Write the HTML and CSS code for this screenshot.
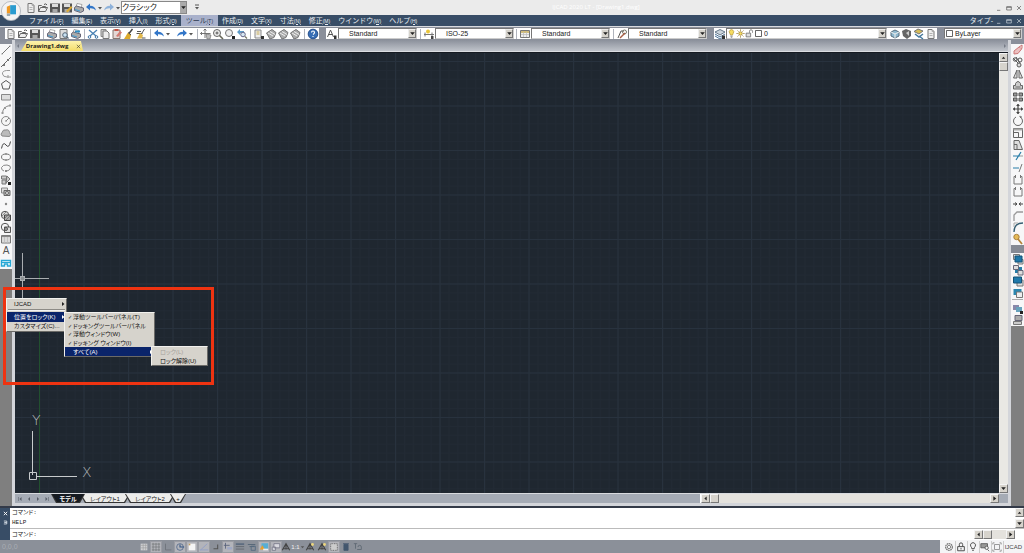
FILE: index.html
```html
<!DOCTYPE html>
<html lang="ja">
<head>
<meta charset="utf-8">
<title>IJCAD 2020 LT - [Drawing1.dwg]</title>
<link rel="stylesheet" href="styles.css">
</head>
<body>
<svg class="defs" aria-hidden="true">
  <defs>
    <g id="new"><path d="M3 1.500h4l2 2v7H3z" fill="#eee" stroke="#777"/><path d="M7 1.500v2h2M4.500 5.500h3M4.500 7.500h3" fill="none" stroke="#999" stroke-width=".7"/></g>
    <g id="open"><path d="M1.500 9.500v-6h3l1 1h3v2M1.500 9.500l2-4h7l-2 4z" fill="#eee" stroke="#666"/><path d="M7 2.500q2-1.500 3 .5" fill="none" stroke="#555"/></g>
    <g id="save"><path d="M1 1.500h10v9H1z" fill="#555"/><path d="M3 2h6v3H3z" fill="#ddd"/><path d="M3.500 7h5v3.500h-5z" fill="#aaa"/></g>
    <g id="saveas"><use href="#save"/><path d="M5 9l5-5 1.500 1.500-5 5z" fill="#d9a936"/></g>
    <g id="print"><path d="M4 1.500l5 1-1 3.500-5-1z" fill="#fff" stroke="#888" stroke-width=".7"/><path d="M1.500 5.500l2-1.500 7 2v3l-3 1.500-6-2z" fill="#aaa" stroke="#667"/><path d="M2 7.500l5 1.500" stroke="#469bce" stroke-width="1.200"/></g>
    <g id="preview"><path d="M2 1.500h7v9H2z" fill="#ddd" stroke="#777"/><circle cx="7" cy="7" r="2.300" fill="#c9e2f2" stroke="#567"/><path d="M8.500 8.500l2 2" stroke="#567" stroke-width="1.300"/></g>
    <g id="publish"><use href="#print"/><path d="M5 2.500h5v2H5z" fill="#2f8ec4"/></g>
    <g id="undo"><path d="M1 5l4-3.500v2.200q5 0 6 4.800-2.500-2.500-6-2.200v2.200z" fill="#3276c8"/></g>
    <g id="redo"><path d="M11 5L7 1.500v2.200q-5 0-6 4.800 2.500-2.500 6-2.200v2.200z" fill="#3276c8"/></g>
    <g id="redo2"><path d="M11 5L7 1.500v2.200q-5 0-6 4.800 2.500-2.500 6-2.200v2.200z" fill="#8fb2da"/></g>
    <g id="down"><path d="M4 5h4L6 7.500z" fill="#555"/></g>
    <g id="up"><path d="M3 8h6L6 4.500z" fill="#222"/></g>
    <g id="dn"><path d="M2 4h8L6 8.500z" fill="#222"/></g>
    <g id="lt"><path d="M8 2.500v7L4 6z" fill="#222"/></g>
    <g id="rt"><path d="M4 2v8l5-4z" fill="#222"/></g>
    <g id="rtw"><path d="M4 2v8l5-4z" fill="#fff"/></g>
    <g id="cut"><path d="M2 2l7 6M10 2L3 8" stroke="#4b83b5" stroke-width="1.300"/><circle cx="2.500" cy="9" r="1.300" fill="none" stroke="#3b73a5"/><circle cx="9.500" cy="9" r="1.300" fill="none" stroke="#3b73a5"/></g>
    <g id="copy"><path d="M2 1.500h5v7H2z" fill="#ccc" stroke="#888"/><path d="M4 3h4l2 2v5.500H4z" fill="#eee" stroke="#777"/></g>
    <g id="paste"><path d="M2 2h7v8.500H2z" fill="#e4d9d6" stroke="#87776f"/><path d="M3.500 1h4v2h-4z" fill="#c65344"/><path d="M5 8l4-5 2 1.500-4 4.500z" fill="#d47b72"/></g>
    <g id="brush"><path d="M9.500 1L6 5.500" stroke="#444" stroke-width="1.500"/><path d="M5 4.500l3 2.500-1 4H1z" fill="#dcaa2d"/><path d="M5 4.500l3 2.500" stroke="#444"/></g>
    <g id="match"><path d="M1.500 5.500h6M2 3.500h4M9.500 1L7 5" stroke="#555"/><path d="M5 5l3 2-1 3.500H2z" fill="#e0b64a"/><path d="M7 10h3.500" stroke="#555"/></g>
    <g id="pan"><path d="M5 1v9M.500 5.500h10M3.500 2.500L5 1l1.500 1.500M2 4L.500 5.500 2 7" fill="none" stroke="#666" stroke-width=".9"/><path d="M6 6l5 1-1 4H7z" fill="#bbb" stroke="#666" stroke-width=".6"/></g>
    <g id="zoom"><circle cx="5" cy="5" r="3.500" fill="#eee" stroke="#666"/><path d="M7.500 7.500L11 11" stroke="#665" stroke-width="1.600"/><path d="M3.500 5h3M5 3.500v3" stroke="#555"/></g>
    <g id="zoomw"><circle cx="5" cy="5" r="3.500" fill="#eee" stroke="#777"/><path d="M7 7l2 2" stroke="#777"/><path d="M8 8h3v3H8z" fill="#222"/></g>
    <g id="zoomp"><path d="M1 4l3-3v2h4v2H4v2z" fill="#5f9cc8"/><circle cx="7" cy="6.500" r="2.300" fill="#d6e7f2" stroke="#668"/><path d="M9 8.500l2 2" stroke="#776" stroke-width="1.300"/></g>
    <g id="props"><path d="M2 2h6v8H2z" fill="#eee" stroke="#888"/><path d="M3.500 4h3M3.500 6h3" stroke="#c4a954"/><path d="M8 8h3v3H8z" fill="#333"/></g>
    <g id="block"><path d="M1.500 5L7 1.500l4 3-2 5-4 1.500z" fill="#aaa" stroke="#777"/><path d="M3 5l5 3M5 3.500l5 3" stroke="#eee"/></g>
    <g id="help"><circle cx="6" cy="6" r="4.800" fill="#376eb5" stroke="#234d8b"/><path d="M4.500 4.500q0-1.500 1.500-1.500T7.500 4.500Q7.500 5.500 6 6.500M6 8v1" fill="none" stroke="#fff" stroke-width="1.100"/></g>
    <g id="style"><path d="M1.500 9L4.500 2l3 7M2.700 6.500h3.600" fill="none" stroke="#555"/><path d="M8 7.500h2.500V11H8z" fill="#333"/></g>
    <g id="dim"><path d="M1 6.500h10M2 4.500v4M9 4.500v4" stroke="#777"/><circle cx="5" cy="3.500" r="2" fill="#e9c53a"/><path d="M8 8h2.500v3H8z" fill="#444"/></g>
    <g id="table"><path d="M1.500 2.500h9v7h-9z" fill="#eee" stroke="#777"/><path d="M2 4h8" stroke="#c7ab55" stroke-width="1.500"/><path d="M2 6.500h8M4.500 4v5M7.500 4v5" stroke="#bbb" stroke-width=".7"/></g>
    <g id="leader"><path d="M2 10l3-7h3" fill="none" stroke="#555"/><circle cx="8.500" cy="4" r="2" fill="none" stroke="#776"/><path d="M4 10l5-5" stroke="#a85f45" stroke-width="1.500"/></g>
    <g id="layers"><path d="M1 4l5-2.500L11 4 6 7z" fill="#ccd4db" stroke="#66798b"/><path d="M1 6l5 3 5-3M1 8l5 3 4-2.500" fill="none" stroke="#4c7398"/></g>
    <g id="layerx"><use href="#layers"/><path d="M8 7.500h3V11H8z" fill="#333"/></g>
    <g id="layers2"><path d="M2 4l4-2 4 2v4L6 10 2 8z" fill="#8eb8ce" stroke="#566d7d"/><path d="M2 4l4 2 4-2M6 6v4" fill="none" stroke="#eee"/></g>
    <g id="layerp"><path d="M1 3l4-2 5 2v5l-4 3-4-3z" fill="#666"/><path d="M5 5l3-2v5z" fill="#ccc"/></g>
    <g id="layerf"><path d="M1 3.500L5 1l5 2-4 3z" fill="#d6bd58" stroke="#777"/><path d="M2 6l4 3 4-3M6 8l4 3" fill="none" stroke="#47799d" stroke-width="1.500"/></g>
    <g id="bulb"><path d="M4.500 8q0-1.500-1-2.500a3 3 0 1 1 5 0Q7.500 6.500 7.500 8z" fill="#f5dc61" stroke="#a9892d" stroke-width=".8"/><path d="M4.500 9.500h3M5 11h2" stroke="#666"/></g>
    <g id="sun"><circle cx="6" cy="6" r="2.300" fill="#f7df66" stroke="#94772a"/><path d="M6 .500v2M6 9.500v2M.500 6h2M9.500 6h2M2 2l1.500 1.500M8.500 8.500L10 10M10 2L8.500 3.500M2 10l1.500-1.500" stroke="#94772a"/></g>
    <g id="lockopen"><path d="M1.500 5.500h6v5h-6z" fill="#ddd" stroke="#666"/><path d="M6 5V3a2 2 0 0 1 4 0v2" fill="none" stroke="#666"/></g>
    <g id="swatch"><path d="M2 2h8v8H2z" fill="#fff" stroke="#333"/></g>
    <g id="logo"><circle cx="12" cy="12" r="11.500" fill="#f3f3f3" stroke="#aeb3ba"/><path d="M7 7l4-2v10H7z" fill="#f09a25"/><path d="M11 5h7v11h-7z" fill="#299bd0"/><path d="M7 15h4v3H7z" fill="#9ca9af"/></g>

    <g id="line"><path d="M2 10l8-8" stroke="#777"/><path d="M1.500 9.500h1v1h-1zM9.500 1.500h1v1h-1z" fill="#777"/></g>
    <g id="xline"><path d="M1 11L11 1" stroke="#666"/><path d="M3 8h2v2H3zM7 3h2v2H7z" fill="#777"/></g>
    <g id="pline"><path d="M10 2.500H6.500Q2 3 2.500 6T7 9h4M8 7v3" fill="none" stroke="#999"/></g>
    <g id="poly"><path d="M6 1.500l4.500 3.200L9 10H3L1.500 4.700z" fill="none" stroke="#555"/></g>
    <g id="rect"><path d="M1.500 3.500h9v5.500h-9z" fill="#ddd" stroke="#888"/></g>
    <g id="arc"><path d="M2.500 10Q3 3.500 10 2.500" fill="none" stroke="#888"/><path d="M1.500 9h2v2h-2zM9 1.500h2v2H9zM4 4h2v2H4z" fill="#999"/></g>
    <g id="circle"><circle cx="6" cy="6" r="4.500" fill="#f6f6f6" stroke="#888"/><path d="M6 6l3-3M5 6h2" stroke="#888"/></g>
    <g id="cloud"><path d="M2 9Q0 7 2 5.500 3 2 6 3q3-1 3.500 2.500Q12 8 9.500 9.500z" fill="#bbb" stroke="#888"/></g>
    <g id="spline"><path d="M1.500 9.500Q3 2 6 6t4.500-3.500" fill="none" stroke="#444"/></g>
    <g id="ellipse"><ellipse cx="6" cy="6" rx="4.500" ry="3" fill="none" stroke="#777"/><path d="M5 2h2v2H5zM5 8h2v2H5z" fill="#999"/></g>
    <g id="earc"><path d="M4 9Q1 8 1.500 5.500 3 2.500 7 3t3.500 3Q9.500 9 6 9.200" fill="none" stroke="#888"/><path d="M5 8h2v2H5z" fill="#888"/></g>
    <g id="insert"><path d="M1.500 2h5v3h-5zM2 6h4v4H2zM7 2l3 3-4 4z" fill="#ccc" stroke="#777"/><path d="M8 8h3v3H8z" fill="#222"/></g>
    <g id="mkblock"><path d="M1.500 2h6v5h-6z" fill="#ddd" stroke="#888"/><path d="M4 4.500h6v5H4z" fill="#bbb" stroke="#666"/><circle cx="7" cy="7" r="1.500" fill="#eee" stroke="#666"/></g>
    <g id="point"><circle cx="6" cy="6" r="1.200" fill="#888"/></g>
    <g id="hatch"><circle cx="5" cy="5" r="3.700" fill="#ddd" stroke="#555"/><path d="M4.500 5h6v5.500h-6z" fill="#aaa" stroke="#444"/><path d="M2 6l4-4M4 9l5-5M6 10l4-4" stroke="#666" stroke-width=".7"/></g>
    <g id="region"><circle cx="5" cy="5" r="3.700" fill="none" stroke="#555"/><path d="M4.500 5h6v5.500h-6z" fill="#ddd" stroke="#555"/><circle cx="6" cy="7" r="1.500" fill="#aaa" stroke="#555"/></g>
    <g id="grid"><path d="M1.500 2.500h9v7.500h-9z" fill="#eee" stroke="#777"/><path d="M2 3.500h8" stroke="#888" stroke-width="1.500"/><path d="M2 6h8M2 8h8M4.500 4v6M7.500 4v6" stroke="#bbb" stroke-width=".8"/></g>
    <g id="block2"><path d="M1.500 9V3.500h9V9h-3V7h-3v2z" fill="#e5f5fa" stroke="#26a7d5" stroke-width="1.400"/><path d="M1.500 5.500h9" stroke="#26a7d5"/></g>

    <g id="erase"><path d="M2 7l5-4 3 1.500L6 9.500 2 10z" fill="#ecc0c0" stroke="#c77"/><path d="M7 3L10 1v3" fill="#f3dada" stroke="#c77"/></g>
    <g id="cpy"><path d="M1 2l6 6M4 1l4 6" stroke="#555"/><circle cx="3" cy="3.500" r="1.700" fill="none" stroke="#555"/><circle cx="8" cy="4" r="2" fill="none" stroke="#555"/><circle cx="7" cy="9" r="2" fill="#ddd" stroke="#555"/></g>
    <g id="mirror"><path d="M5 2L1.500 10H5zM7 2l3.500 8H7z" fill="#ddd" stroke="#666"/></g>
    <g id="offset"><path d="M1.500 10V6.500h2v-2q2.500-4 5 0v2h2V10zM3.500 8h5" fill="#ccc" stroke="#666"/></g>
    <g id="array"><path d="M1.500 2h3.500v3H1.500zM7 2h3.500v3H7zM1.500 7H5v3H1.500zM7 7h3.500v3H7z" fill="#999" stroke="#555"/></g>
    <g id="move"><path d="M6 1v10M1 6h10" stroke="#444" stroke-width="1.200"/><path d="M4 3l2-2 2 2zM4 9l2 2 2-2zM3 4L1 6l2 2zM9 4l2 2-2 2z" fill="#444"/></g>
    <g id="rotate"><path d="M8 2a4.500 4.500 0 1 1-4 0M8 2V.800M8 2h2" fill="none" stroke="#666"/></g>
    <g id="scale"><path d="M1.500 1.500h9v9h-9zM1.500 5.500h5v5" fill="none" stroke="#666"/><path d="M1.500 1.500h9v2h-9z" fill="#aaa"/></g>
    <g id="stretch"><path d="M2 1.500h5l3.500 9H2zM2 5.500h3v5" fill="#ddd" stroke="#666"/></g>
    <g id="trim"><path d="M1 6h7M4 10l5-8" stroke="#287da8" stroke-width="1.200"/><path d="M8 6h3" stroke="#999"/></g>
    <g id="extend"><path d="M1 6h6" stroke="#287da8"/><path d="M7 10l3-8" stroke="#777"/></g>
    <g id="break"><path d="M4 2.500H2V10h8V2.500H8M3.500 1v3M8.500 1v3" fill="none" stroke="#777"/></g>
    <g id="join"><path d="M1 6h4M7 6h4M3 4.500L5 6 3 7.500M9 4.500L7 6l2 1.500" fill="none" stroke="#444"/></g>
    <g id="chamfer"><path d="M2 11V5l3-3h6" fill="none" stroke="#999" stroke-width="1.300"/></g>
    <g id="fillet"><path d="M2 11Q2 2 11 2" fill="none" stroke="#355e72" stroke-width="1.300"/><path d="M2 2v4M2 2h4" stroke="#aaa"/></g>
    <g id="explode"><circle cx="4.500" cy="4" r="2.700" fill="#e6bb58" stroke="#aa8240"/><path d="M6 6l4 5" stroke="#b38338" stroke-width="1.800"/></g>
    <g id="front"><path d="M1.500 1.500h6v5h-6zM6 6.500h5V11H6z" fill="#ddd" stroke="#777"/><path d="M3 3h7v6H3z" fill="#1d77a9" stroke="#155276"/></g>
    <g id="back"><path d="M3 3h7v6H3z" fill="#267da8"/><path d="M1.500 1.500h5v4h-5zM6 6.500h5V11H6z" fill="#ddd" stroke="#667"/></g>
    <g id="above"><path d="M5 5h6v6H5z" fill="#ddd" stroke="#777"/><path d="M1.500 2h8v6h-8z" fill="#1f79ab" stroke="#155276"/></g>
    <g id="under"><path d="M1.500 2h8v6h-8z" fill="#2b86af"/><path d="M4.500 5h6v5.500h-6z" fill="#eee" stroke="#777"/></g>
    <g id="txtfront"><path d="M1 2h6v5H1z" fill="#88a"/><path d="M4 4h6v5H4z" fill="#66a1bb"/><path d="M8 8h3v3H8z" fill="#222"/></g>
    <g id="hatchback"><path d="M3 1.500h7v5H3z" fill="#aaa" stroke="#667"/><path d="M1.500 7.500h8v3h-8z" fill="#ccc" stroke="#777"/></g>

    <g id="snap"><path d="M2 2h8v8H2z" fill="#cfd0d3"/><path d="M2 4h8M2 7h8M5 2v8M8 2v8" stroke="#999" stroke-width=".7"/></g>
    <g id="sgrid"><path d="M1 2.500h10M1 6h10M1 9.500h10M2.500 1v10M6 1v10M9.500 1v10" stroke="#707276" stroke-width=".8"/></g>
    <g id="ortho"><path d="M3 2v7.500h7" fill="none" stroke="#6c7178"/></g>
    <g id="polar"><circle cx="6" cy="6" r="4" fill="none" stroke="#546b8b"/><path d="M6 3v3h5" fill="none" stroke="#345684" stroke-width="1.300"/></g>
    <g id="osnap"><path d="M2 2h8v8H2z" fill="#f5f5f5"/><path d="M2 2h2v2H2z" fill="#bd9c62"/></g>
    <g id="angle"><path d="M1 9.500h10M2 9.500L10 2" fill="none" stroke="#8f9dc8"/></g>
    <g id="dyn"><path d="M8 3v5H3" fill="none" stroke="#555" stroke-width="1.300"/></g>
    <g id="input"><path d="M3 1v7M1 4h7" stroke="#56607a"/><path d="M5 6h6v3H5z" fill="#a0a9c5"/></g>
    <g id="lines"><path d="M1 2.500h10" stroke="#4b5e76" stroke-width="1.500"/><path d="M1 5.500h10M1 8.500h10" stroke="#60656c"/></g>
    <g id="cycle"><path d="M1 3h9M3 5.500h6" stroke="#4f6272"/><path d="M5 5h5v5H5z" fill="none" stroke="#536980"/></g>
    <g id="model"><path d="M3 1.500h8v7H3z" fill="#58aed5"/><path d="M1 9l3-5 3 5z" fill="#eaa02b"/><path d="M5 8h6v2H5z" fill="#eee"/></g>
    <g id="quick"><path d="M3.500 2h7v5h-7zM1.500 6h4v4h-4z" fill="#d9d9df" stroke="#767788"/></g>
    <g id="scaleicon"><path d="M1.500 10L6 2l4.500 8M6 3v6M3 8h6" fill="none" stroke="#444" stroke-width="1.300"/></g>
    <g id="ann"><path d="M1.500 10L6 2l4.500 8M6 3v6M3 8h6" fill="none" stroke="#444" stroke-width="1.300"/><circle cx="9" cy="3" r="1.700" fill="#edd67c"/></g>
    <g id="dotted"><path d="M2 2h8v8H2z" fill="#ccc" stroke="#555" stroke-dasharray="1"/></g>
    <g id="trash"><path d="M3.500 3h5v7h-5zM2.500 2h7" fill="#42566d" stroke="#42566d"/></g>
    <g id="clean"><path d="M1 2h4M3 2v6M5 9h5V6a2 2 0 0 0-4 0" fill="none" stroke="#5c6671"/></g>
    <g id="gear"><circle cx="6" cy="6" r="4" fill="none" stroke="#777" stroke-width="1.500" stroke-dasharray="2 .6"/><circle cx="6" cy="6" r="2" fill="none" stroke="#777"/></g>
    <g id="lock"><path d="M2 5.500h8v5H2zM4 5V3a2 2 0 0 1 4 0v2M6 7v2" fill="none" stroke="#333"/></g>
    <g id="lamp"><path d="M4.500 8q0-1.500-1-2.500a3 3 0 1 1 5 0Q7.500 6.500 7.500 8zM5 10h2" fill="none" stroke="#333"/></g>
    <g id="tray"><path d="M1 2h8v5H1z" fill="#999" stroke="#555"/><circle cx="8" cy="7" r="2" fill="#eee" stroke="#555"/><path d="M9 9l2 2" stroke="#555"/></g>
    <g id="full"><path d="M3 3h6v6H3zM1 3V1h2M9 1h2v2M11 9v2H9M3 11H1V9" fill="none" stroke="#888"/></g>
    <pattern id="minor" width="8.900" height="8.900" patternUnits="userSpaceOnUse" x="24" y="8"><path d="M.500 0v9M0 .500h9" stroke="#222a34"/></pattern>
    <pattern id="major" width="44.500" height="44.500" patternUnits="userSpaceOnUse" x="24" y="8"><path d="M.500 0v45M0 .500h45" stroke="#28323e"/></pattern>
  </defs>
</svg>

<header>
  <div class="titlebar">
    <button class="logo" aria-label="アプリケーション"><svg viewBox="0 0 24 24"><use href="#logo"/></svg></button>
    <div class="quick">
      <button class="ib" aria-label="新規"><svg viewBox="0 0 12 12"><use href="#new"/></svg></button>
      <button class="ib" aria-label="開く"><svg viewBox="0 0 12 12"><use href="#open"/></svg></button>
      <button class="ib" aria-label="保存"><svg viewBox="0 0 12 12"><use href="#save"/></svg></button>
      <button class="ib" aria-label="別名保存"><svg viewBox="0 0 12 12"><use href="#saveas"/></svg></button>
      <button class="ib" aria-label="印刷"><svg viewBox="0 0 12 12"><use href="#print"/></svg></button>
      <button class="ib" aria-label="元に戻す"><svg viewBox="0 0 12 12"><use href="#undo"/></svg></button>
      <button class="ib tiny" aria-label="元に戻す履歴"><svg viewBox="0 0 12 12"><use href="#down"/></svg></button>
      <button class="ib" aria-label="やり直し"><svg viewBox="0 0 12 12"><use href="#redo2"/></svg></button>
      <button class="ib tiny" aria-label="やり直し履歴"><svg viewBox="0 0 12 12"><use href="#down"/></svg></button>
      <label class="combo workspace"><select aria-label="ワークスペース"><option>クラシック</option></select><span class="arrow"><svg viewBox="0 0 12 12"><use href="#dn"/></svg></span></label>
      <button class="ib more" aria-label="カスタマイズ"><svg viewBox="0 0 12 12"><path d="M4 3h4" stroke="#555"/><use href="#down"/></svg></button>
    </div>
    <h1>IJCAD 2020 LT - [Drawing1.dwg]</h1>
    <div class="wins">
      <button aria-label="最小化"><svg viewBox="0 0 12 12"><path d="M3 9.500h5" stroke="#555"/></svg></button>
      <button aria-label="元のサイズ"><svg viewBox="0 0 12 12"><path d="M2.500 4h7v5h-7zM2.500 5h7" fill="none" stroke="#555"/></svg></button>
      <button aria-label="閉じる"><svg viewBox="0 0 12 12"><path d="M3 3l6 6M9 3L3 9" stroke="#555"/></svg></button>
    </div>
  </div>
  <nav class="menubar">
    <button>ファイル<u>(F)</u></button><button>編集<u>(E)</u></button><button>表示<u>(V)</u></button><button>挿入<u>(I)</u></button><button>形式<u>(O)</u></button><button class="on">ツール<u>(T)</u></button><button>作成<u>(D)</u></button><button>文字<u>(X)</u></button><button>寸法<u>(N)</u></button><button>修正<u>(M)</u></button><button>ウインドウ<u>(W)</u></button><button>ヘルプ<u>(H)</u></button>
    <span class="grow"></span>
    <button class="type">タイプ-</button>
    <div class="wins light">
      <button aria-label="図面を最小化"><svg viewBox="0 0 12 12"><path d="M3 9.500h5" stroke="#ccd4dd"/></svg></button>
      <button aria-label="図面を元のサイズ"><svg viewBox="0 0 12 12"><path d="M2.500 4h7v5h-7zM2.500 5h7" fill="none" stroke="#ccd4dd"/></svg></button>
      <button aria-label="図面を閉じる"><svg viewBox="0 0 12 12"><path d="M3 3l6 6M9 3L3 9" stroke="#ccd4dd"/></svg></button>
    </div>
  </nav>
  <div class="toolbar">
    <div class="band main">
      <button class="ib" aria-label="新規作成"><svg viewBox="0 0 12 12"><use href="#new"/></svg></button>
      <button class="ib" aria-label="図面を開く"><svg viewBox="0 0 12 12"><use href="#open"/></svg></button>
      <button class="ib" aria-label="上書き保存"><svg viewBox="0 0 12 12"><use href="#save"/></svg></button>
      <i class="sep"></i>
      <button class="ib" aria-label="図面を印刷"><svg viewBox="0 0 12 12"><use href="#print"/></svg></button>
      <button class="ib" aria-label="プレビュー"><svg viewBox="0 0 12 12"><use href="#preview"/></svg></button>
      <button class="ib" aria-label="パブリッシュ"><svg viewBox="0 0 12 12"><use href="#publish"/></svg></button>
      <i class="sep"></i>
      <button class="ib" aria-label="切り取り"><svg viewBox="0 0 12 12"><use href="#cut"/></svg></button>
      <button class="ib" aria-label="コピー"><svg viewBox="0 0 12 12"><use href="#copy"/></svg></button>
      <button class="ib" aria-label="貼り付け"><svg viewBox="0 0 12 12"><use href="#paste"/></svg></button>
      <button class="ib" aria-label="プロパティコピー"><svg viewBox="0 0 12 12"><use href="#brush"/></svg></button>
      <button class="ib" aria-label="ブロック編集"><svg viewBox="0 0 12 12"><use href="#match"/></svg></button>
      <i class="sep wide"></i>
      <button class="ib" aria-label="取り消し"><svg viewBox="0 0 12 12"><use href="#undo"/></svg></button>
      <button class="ib tiny" aria-label="取り消し履歴"><svg viewBox="0 0 12 12"><use href="#down"/></svg></button>
      <i class="gap"></i>
      <button class="ib" aria-label="再実行"><svg viewBox="0 0 12 12"><use href="#redo"/></svg></button>
      <button class="ib tiny" aria-label="再実行履歴"><svg viewBox="0 0 12 12"><use href="#down"/></svg></button>
      <i class="sep wide"></i>
      <button class="ib" aria-label="画面移動"><svg viewBox="0 0 12 12"><use href="#pan"/></svg></button>
      <button class="ib" aria-label="ズーム"><svg viewBox="0 0 12 12"><use href="#zoom"/></svg></button>
      <button class="ib" aria-label="窓ズーム"><svg viewBox="0 0 12 12"><use href="#zoomw"/></svg></button>
      <button class="ib" aria-label="前画面ズーム"><svg viewBox="0 0 12 12"><use href="#zoomp"/></svg></button>
      <i class="sep"></i>
      <button class="ib" aria-label="プロパティ"><svg viewBox="0 0 12 12"><use href="#props"/></svg></button>
      <button class="ib" aria-label="デザインセンター"><svg viewBox="0 0 12 12"><use href="#block"/></svg></button>
      <button class="ib" aria-label="ツールパレット"><svg viewBox="0 0 12 12"><use href="#block"/></svg></button>
      <button class="ib" aria-label="計算"><svg viewBox="0 0 12 12"><use href="#block"/></svg></button>
      <i class="sep wide"></i>
      <button class="ib" aria-label="ヘルプ"><svg viewBox="0 0 12 12"><use href="#help"/></svg></button>
    </div>
    <div class="band styles">
      <button class="ib" aria-label="文字スタイル管理"><svg viewBox="0 0 12 12"><use href="#style"/></svg></button>
      <label class="combo"><select aria-label="文字スタイル"><option>Standard</option></select><span class="arrow"><svg viewBox="0 0 12 12"><use href="#dn"/></svg></span></label>
      <i class="sep wide"></i>
      <button class="ib" aria-label="寸法スタイル管理"><svg viewBox="0 0 12 12"><use href="#dim"/></svg></button>
      <label class="combo"><select aria-label="寸法スタイル"><option>ISO-25</option></select><span class="arrow"><svg viewBox="0 0 12 12"><use href="#dn"/></svg></span></label>
      <i class="sep"></i>
      <button class="ib" aria-label="表スタイル管理"><svg viewBox="0 0 12 12"><use href="#table"/></svg></button>
      <label class="combo"><select aria-label="表スタイル"><option>Standard</option></select><span class="arrow"><svg viewBox="0 0 12 12"><use href="#dn"/></svg></span></label>
      <i class="sep wide"></i>
      <button class="ib" aria-label="引出線スタイル管理"><svg viewBox="0 0 12 12"><use href="#leader"/></svg></button>
      <label class="combo"><select aria-label="引出線スタイル"><option>Standard</option></select><span class="arrow"><svg viewBox="0 0 12 12"><use href="#dn"/></svg></span></label>
    </div>
    <div class="band layerbar">
      <button class="ib" aria-label="画層管理"><svg viewBox="0 0 12 12"><use href="#layerx"/></svg></button>
      <label class="combo layer">
        <svg viewBox="0 0 12 12"><use href="#bulb"/></svg><svg viewBox="0 0 12 12"><use href="#sun"/></svg><svg viewBox="0 0 12 12"><use href="#lockopen"/></svg><svg viewBox="0 0 12 12"><use href="#swatch"/></svg>
        <select aria-label="画層"><option>0</option></select><span class="arrow"><svg viewBox="0 0 12 12"><use href="#dn"/></svg></span></label>
      <button class="ib" aria-label="現在画層"><svg viewBox="0 0 12 12"><use href="#layers2"/></svg></button>
      <button class="ib" aria-label="直前画層"><svg viewBox="0 0 12 12"><use href="#layerp"/></svg></button>
      <button class="ib" aria-label="画層状態"><svg viewBox="0 0 12 12"><use href="#layerf"/></svg></button>
      <button class="ib" aria-label="画層一覧"><svg viewBox="0 0 12 12"><use href="#new"/></svg></button>
    </div>
    <div class="band color">
      <label class="combo layer"><svg viewBox="0 0 12 12"><use href="#swatch"/></svg><select aria-label="色"><option>ByLayer</option></select><span class="arrow"><svg viewBox="0 0 12 12"><use href="#dn"/></svg></span></label>
    </div>
  </div>
</header>

<main class="work">
  <aside class="side left">
    <div class="strip draw">
      <button aria-label="線分"><svg viewBox="0 0 12 12"><use href="#line"/></svg></button>
      <button aria-label="構築線"><svg viewBox="0 0 12 12"><use href="#xline"/></svg></button>
      <button aria-label="ポリライン"><svg viewBox="0 0 12 12"><use href="#pline"/></svg></button>
      <button aria-label="ポリゴン"><svg viewBox="0 0 12 12"><use href="#poly"/></svg></button>
      <button aria-label="長方形"><svg viewBox="0 0 12 12"><use href="#rect"/></svg></button>
      <button aria-label="円弧"><svg viewBox="0 0 12 12"><use href="#arc"/></svg></button>
      <button aria-label="円"><svg viewBox="0 0 12 12"><use href="#circle"/></svg></button>
      <button aria-label="雲マーク"><svg viewBox="0 0 12 12"><use href="#cloud"/></svg></button>
      <button aria-label="スプライン"><svg viewBox="0 0 12 12"><use href="#spline"/></svg></button>
      <button aria-label="楕円"><svg viewBox="0 0 12 12"><use href="#ellipse"/></svg></button>
      <button aria-label="楕円弧"><svg viewBox="0 0 12 12"><use href="#earc"/></svg></button>
      <button aria-label="ブロック挿入"><svg viewBox="0 0 12 12"><use href="#insert"/></svg></button>
      <button aria-label="ブロック作成"><svg viewBox="0 0 12 12"><use href="#mkblock"/></svg></button>
      <button aria-label="点"><svg viewBox="0 0 12 12"><use href="#point"/></svg></button>
      <button aria-label="ハッチング"><svg viewBox="0 0 12 12"><use href="#hatch"/></svg></button>
      <button aria-label="リージョン"><svg viewBox="0 0 12 12"><use href="#region"/></svg></button>
      <button aria-label="表"><svg viewBox="0 0 12 12"><use href="#grid"/></svg></button>
      <button class="mtext" aria-label="マルチテキスト">A</button>
      <button aria-label="ツール"><svg viewBox="0 0 12 12"><use href="#block2"/></svg></button>
    </div>
  </aside>

  <section class="doc">
    <div class="doctabs">
      <button class="nav" aria-label="前のタブ"><svg viewBox="0 0 12 12"><path d="M8 2v8L4 6z" fill="#777c87"/></svg></button>
      <button class="dtab"><span>Drawing1.dwg</span><svg viewBox="0 0 12 12"><path d="M2 2l8 8M10 2L2 10" stroke="#333" stroke-width="1.400"/></svg></button>
      <span class="grow"></span>
      <button class="nav" aria-label="次のタブ"><svg viewBox="0 0 12 12"><path d="M4 2v8l4-4z" fill="#777c87"/></svg></button>
    </div>
    <div class="view">
      <div class="canvas">
        <svg class="gridlines"><rect width="100%" height="100%" fill="#1f2730"/><rect width="100%" height="100%" fill="url(#minor)"/><rect width="100%" height="100%" fill="url(#major)"/><path d="M24.500 0v2000" stroke="#22502f"/></svg>
        <svg class="cross" viewBox="0 0 34 46"><path d="M7.500 0v46M0 25.500h34" stroke="#a9adb0"/><rect x="5.500" y="23.500" width="4" height="4" fill="#8b9093" stroke="#a9adb0"/></svg>
        <svg class="ucs" viewBox="0 0 84 80"><path d="M17.500 28v44M21 73.500h41" stroke="#c8cbcd"/><path d="M14.500 69.500h7v7h-7z" fill="none" stroke="#c8cbcd"/><text x="17" y="22">Y</text><text x="67" y="74">X</text></svg>
      </div>
      <div class="vscroll"><button aria-label="上へ"><svg viewBox="0 0 12 12"><use href="#up"/></svg></button><span class="thumb"></span><span class="grow"></span><button aria-label="下へ"><svg viewBox="0 0 12 12"><use href="#dn"/></svg></button></div>
    </div>
    <div class="layouts">
      <div class="navs">
        <button aria-label="先頭"><svg viewBox="0 0 12 12"><path d="M9 2v8L5 6zM3 2h1v8H3z" fill="#555b65"/></svg></button>
        <button aria-label="前"><svg viewBox="0 0 12 12"><path d="M8 2v8L4 6z" fill="#555b65"/></svg></button>
        <button aria-label="次"><svg viewBox="0 0 12 12"><path d="M4 2v8l4-4z" fill="#555b65"/></svg></button>
        <button aria-label="末尾"><svg viewBox="0 0 12 12"><path d="M3 2v8l4-4zM8 2h1v8H8z" fill="#555b65"/></svg></button>
      </div>
      <button class="ltab cur"><span>モデル</span></button>
      <button class="ltab"><span>レイアウト1</span></button>
      <button class="ltab"><span>レイアウト2</span></button>
      <button class="ltab add"><span>+</span></button>
      <span class="grow"></span>
      <div class="hscroll"><button aria-label="左へ"><svg viewBox="0 0 12 12"><use href="#lt"/></svg></button><span class="thumb"></span><span class="grow"></span><button aria-label="右へ"><svg viewBox="0 0 12 12"><use href="#rt"/></svg></button></div>
    </div>
  </section>

  <aside class="side right">
    <div class="strip modify">
      <button aria-label="削除"><svg viewBox="0 0 12 12"><use href="#erase"/></svg></button>
      <button aria-label="複写"><svg viewBox="0 0 12 12"><use href="#cpy"/></svg></button>
      <button aria-label="鏡像"><svg viewBox="0 0 12 12"><use href="#mirror"/></svg></button>
      <button aria-label="オフセット"><svg viewBox="0 0 12 12"><use href="#offset"/></svg></button>
      <button aria-label="配列複写"><svg viewBox="0 0 12 12"><use href="#array"/></svg></button>
      <button aria-label="移動"><svg viewBox="0 0 12 12"><use href="#move"/></svg></button>
      <button aria-label="回転"><svg viewBox="0 0 12 12"><use href="#rotate"/></svg></button>
      <button aria-label="尺度変更"><svg viewBox="0 0 12 12"><use href="#scale"/></svg></button>
      <button aria-label="ストレッチ"><svg viewBox="0 0 12 12"><use href="#stretch"/></svg></button>
      <button aria-label="トリム"><svg viewBox="0 0 12 12"><use href="#trim"/></svg></button>
      <button aria-label="延長"><svg viewBox="0 0 12 12"><use href="#extend"/></svg></button>
      <button aria-label="点で部分削除"><svg viewBox="0 0 12 12"><use href="#break"/></svg></button>
      <button aria-label="部分削除"><svg viewBox="0 0 12 12"><use href="#break"/></svg></button>
      <button aria-label="結合"><svg viewBox="0 0 12 12"><use href="#join"/></svg></button>
      <button aria-label="面取り"><svg viewBox="0 0 12 12"><use href="#chamfer"/></svg></button>
      <button aria-label="フィレット"><svg viewBox="0 0 12 12"><use href="#fillet"/></svg></button>
      <button aria-label="分解"><svg viewBox="0 0 12 12"><use href="#explode"/></svg></button>
    </div>
    <div class="strip order">
      <button aria-label="最前面"><svg viewBox="0 0 12 12"><use href="#front"/></svg></button>
      <button aria-label="最背面"><svg viewBox="0 0 12 12"><use href="#back"/></svg></button>
      <button aria-label="オブジェクトの前"><svg viewBox="0 0 12 12"><use href="#above"/></svg></button>
      <button aria-label="オブジェクトの後"><svg viewBox="0 0 12 12"><use href="#under"/></svg></button>
      <i class="hsep"></i>
      <button aria-label="注釈を前面"><svg viewBox="0 0 12 12"><use href="#txtfront"/></svg></button>
      <button aria-label="ハッチングを背面"><svg viewBox="0 0 12 12"><use href="#hatchback"/></svg></button>
    </div>
  </aside>
</main>

<section class="command">
  <div class="grip"><button aria-label="コマンドラインを閉じる"><svg viewBox="0 0 12 12"><path d="M2 2l8 8M10 2l-8 8" stroke="#fff" stroke-width="2.200"/></svg></button><button aria-label="設定"><svg viewBox="0 0 12 12"><path d="M2 2.500h7v7H2M3 6h6" fill="none" stroke="#dde4ec" stroke-width="2"/></svg></button></div>
  <div class="lines">
    <div class="log"><div class="past"><p>コマンド:</p><p>HELP</p></div><div class="cscroll"><button aria-label="履歴を上へ"><svg viewBox="0 0 12 12"><use href="#up"/></svg></button><button aria-label="履歴を下へ"><svg viewBox="0 0 12 12"><use href="#dn"/></svg></button></div></div>
    <div class="entry"><label for="cmd">コマンド:</label><input id="cmd" type="text"><div class="hscroll short"><button aria-label="行を左へ"><svg viewBox="0 0 12 12"><use href="#lt"/></svg></button><span class="thumb"></span><span class="grow"></span><button aria-label="行を右へ"><svg viewBox="0 0 12 12"><use href="#rt"/></svg></button></div></div>
  </div>
</section>

<footer class="status">
  <span class="coords">0,0,0</span>
  <div class="modes">
    <button aria-label="スナップ"><svg viewBox="0 0 12 12"><use href="#snap"/></svg></button>
    <button class="lit" aria-label="グリッド"><svg viewBox="0 0 12 12"><use href="#sgrid"/></svg></button>
    <button aria-label="直交"><svg viewBox="0 0 12 12"><use href="#ortho"/></svg></button>
    <button class="lit" aria-label="極トラッキング"><svg viewBox="0 0 12 12"><use href="#polar"/></svg></button>
    <button class="lit" aria-label="Oスナップ"><svg viewBox="0 0 12 12"><use href="#osnap"/></svg></button>
    <button class="lit" aria-label="Oトラック"><svg viewBox="0 0 12 12"><use href="#angle"/></svg></button>
    <button aria-label="ダイナミックUCS"><svg viewBox="0 0 12 12"><use href="#dyn"/></svg></button>
    <button class="lit" aria-label="ダイナミック入力"><svg viewBox="0 0 12 12"><use href="#input"/></svg></button>
    <button aria-label="線の太さ"><svg viewBox="0 0 12 12"><use href="#lines"/></svg></button>
    <button aria-label="選択の循環"><svg viewBox="0 0 12 12"><use href="#cycle"/></svg></button>
    <button class="lit" aria-label="モデル"><svg viewBox="0 0 12 12"><use href="#model"/></svg></button>
    <button class="lit" aria-label="クイックプロパティ"><svg viewBox="0 0 12 12"><use href="#quick"/></svg></button>
    <button class="scale" aria-label="注釈尺度 1:1"><svg viewBox="0 0 12 12"><use href="#scaleicon"/></svg><span>1:1</span><svg class="car" viewBox="3 0 6 12"><use href="#down"/></svg></button>
    <button aria-label="注釈表示"><svg viewBox="0 0 12 12"><use href="#ann"/></svg></button>
    <button aria-label="注釈自動尺度"><svg viewBox="0 0 12 12"><use href="#ann"/></svg></button>
    <button class="lit" aria-label="選択表示"><svg viewBox="0 0 12 12"><use href="#dotted"/></svg></button>
    <button aria-label="名前削除"><svg viewBox="0 0 12 12"><use href="#trash"/></svg></button>
    <button aria-label="フィルタ"><svg viewBox="0 0 12 12"><use href="#clean"/></svg></button>
  </div>
  <span class="grow"></span>
  <div class="traybar">
    <button aria-label="設定"><svg viewBox="0 0 12 12"><use href="#gear"/></svg></button>
    <button aria-label="ロック"><svg viewBox="0 0 12 12"><use href="#lock"/></svg></button>
    <button aria-label="表示"><svg viewBox="0 0 12 12"><use href="#lamp"/></svg></button>
    <button aria-label="検索"><svg viewBox="0 0 12 12"><use href="#tray"/></svg></button>
    <button aria-label="全画面"><svg viewBox="0 0 12 12"><use href="#full"/></svg></button>
    <span>IJCAD</span>
  </div>
</footer>

<div class="popup m1">
  <button class="mi top"><span>IJCAD</span><svg viewBox="0 0 12 12"><use href="#rt"/></svg></button>
  <hr>
  <button class="mi sel"><span>位置をロック(K)</span><svg viewBox="0 0 12 12"><use href="#rtw"/></svg></button>
  <button class="mi"><span>カスタマイズ(C)...</span></button>
</div>
<div class="popup m2">
  <button class="mi chk"><span>浮動ツールバー/パネル(T)</span></button>
  <button class="mi chk"><span>ドッキングツールバー/パネル</span></button>
  <button class="mi chk"><span>浮動ウィンドウ(W)</span></button>
  <button class="mi chk"><span>ドッキング ウィンドウ(I)</span></button>
  <button class="mi sel"><span>すべて(A)</span><svg viewBox="0 0 12 12"><use href="#rtw"/></svg></button>
</div>
<div class="popup m3">
  <button class="mi" disabled><span>ロック(L)</span></button>
  <button class="mi"><span>ロック解除(U)</span></button>
</div>
<div class="mark"></div>
</body>
</html>
```
FILE: styles.css
```css
* { box-sizing: border-box; margin: 0; padding: 0; }
html, body { height: 100%; overflow: hidden; }
body {
  display: flex; flex-direction: column; position: relative;
  font: 7px/10px "Liberation Sans", "Noto Sans CJK JP", sans-serif;
  color: #222; background: #7f7f7f;
}
.defs { position: absolute; width: 0; height: 0; }
button, select, input { font: inherit; color: inherit; border: 0; background: none; border-radius: 0; }
button { display: flex; align-items: center; justify-content: center; white-space: nowrap; flex: none; }
svg { display: block; flex: none; }
.grow { flex: 1; }

/* title bar */
.titlebar { height: 15px; display: flex; align-items: center; background: #ebebeb; position: relative; }
.logo { position: absolute; left: 1px; top: 1px; z-index: 2; }
.logo svg { width: 20px; height: 20px; }
.quick { display: flex; align-items: center; padding-left: 25px; }
.ib { width: 12px; height: 12px; }
.ib svg { width: 12px; height: 12px; }
.ib.tiny { width: 6px; }
.ib.tiny svg { margin: 0 -3px; }
.more { margin-left: 4px; }
.quick .workspace { width: 66px; height: 13px; border: 1px solid #888; font-size: 8px; font-feature-settings: "palt"; }
.quick .workspace select { padding-left: 0; }
h1 { position: absolute; left: 0; right: 0; margin: 0 auto; width: max-content; padding-left: 168px; font: 6px/15px "Open Sans", sans-serif; color: #fff; }
.wins { display: flex; margin-left: auto; }
.wins button { width: 10px; height: 12px; }
.wins svg { width: 8px; height: 8px; }

/* menu bar */
.menubar { height: 11px; display: flex; align-items: stretch; background: #384d66; color: #e8edf2; padding-left: 25px; }
.menubar button { padding: 0 4px; }
.menubar u { font-size: 5px; }
.menubar .on { background: #a9b1cb; color: #2e3a52; padding: 0 5px; }
.menubar .type { padding: 0 1px; }
.menubar .wins { margin-left: 0; }
.menubar .wins button { padding: 0; height: 11px; }

/* toolbar */
.toolbar { height: 14px; display: flex; gap: 7px; background: #8a8f9a; padding: 1px 2px 1px 5px; border-top: 1px solid #d8dade; }
.band { display: flex; align-items: center; background: #fff; flex: none; }
.sep { width: 5px; height: 10px; flex: none; background: linear-gradient(#b0b4bd, #b0b4bd) center / 1px 100% no-repeat; }
.sep.wide { width: 6px; }
.gap { width: 5px; }
.layerbar { flex: 1; }
.combo { display: flex; align-items: center; height: 11px; width: 79px; background: #fff; border: 1px solid #777; border-right-color: #ccc; border-bottom-color: #ccc; }
.combo select { appearance: none; flex: 1; min-width: 0; width: 10px; height: 9px; padding-left: 10px; outline: 0; }
.combo svg { width: 9px; height: 9px; }
.arrow { width: 8px; height: 9px; background: #d6d3cc; border: 1px solid; border-color: #eee #777 #777 #eee; display: flex; align-items: center; justify-content: center; flex: none; }
.combo .arrow svg { width: 7px; height: 7px; }
.workspace .arrow { border: 0; height: 11px; width: 6px; background: #aaa; }
.combo.layer select { padding-left: 1px; }
.layerbar .layer { flex: 1; margin-right: 2px; }
.color .combo { width: 78px; }

/* work area */
.work { flex: 1; min-height: 0; display: flex; }
.side { width: 12px; background: #7f7f7f; border-top: 4px solid #8a8f9a; flex: none; }
.side.right { width: 13px; }
.strip { display: flex; flex-direction: column; background: #f7f7f8; }
.strip button { flex: 1; min-height: 0; }
.strip svg { width: 12px; height: 12px; }
.draw { height: 225px; }
.modify { height: 201px; }
.order { height: 81px; border-top: 8px solid #858a94; }
.hsep { height: 3px; border-top: 1px solid #aaa; margin: 1px; }
.mtext { font-size: 10px; color: #555; }
.doc { flex: 1; min-width: 0; display: flex; flex-direction: column; background: #a5abb5; border: solid #d3d5da; border-width: 0 3px 3px; }
.doctabs { height: 12px; flex: none; display: flex; align-items: flex-end; background: linear-gradient(#8b909b, #bfc3ca); border-bottom: 1px solid #dcdee2; }
.nav { width: 6px; height: 10px; }
.nav svg { width: 6px; height: 6px; }
.dtab { height: 10px; width: 62px; gap: 8px; padding-left: 3px; background: linear-gradient(#fdf3ad, #f3dc68); clip-path: polygon(6px 0, calc(100% - 2px) 0, 100% 100%, 0 100%); font: bold 6px/9px "Open Sans", sans-serif; color: #222; }
.dtab svg { width: 5px; height: 5px; }
.view { flex: 1; min-height: 0; display: flex; border-top: 1px solid #151a21; }
.canvas { flex: 1; min-width: 0; position: relative; overflow: hidden; background: #1f2730; }
.gridlines { position: absolute; inset: 0; width: 100%; height: 100%; }
.cross { position: absolute; left: 0; top: 200px; width: 34px; height: 46px; }
.ucs { position: absolute; left: 0; bottom: 10px; width: 84px; height: 80px; font: 200 14px "DejaVu Sans Light", "DejaVu Sans", sans-serif; fill: #b4b8bb; }
.vscroll { width: 9px; display: flex; flex-direction: column; background: #e9e8e4; flex: none; }
.vscroll button, .hscroll button, .cscroll button, .thumb { background: #d6d3cc; border: 1px solid; border-color: #f4f4f4 #777 #777 #f4f4f4; flex: none; }
.vscroll button, .vscroll .thumb, .cscroll button { width: 9px; height: 9px; }
.vscroll svg, .hscroll svg, .cscroll svg { width: 7px; height: 7px; }
.layouts { height: 10px; flex: none; display: flex; align-items: stretch; border-top: 1px solid #d8dade; }
.navs { display: flex; }
.navs button { width: 9px; }
.navs svg { width: 6px; height: 6px; }
.ltab { width: 50px; margin-right: -5px; height: 9px; background: #333; clip-path: polygon(0 0, 100% 0, calc(100% - 5px) 100%, 5px 100%); position: relative; font-size: 6px; font-feature-settings: "palt"; }
.ltab::before { content: ""; position: absolute; inset: 0; background: #ececea; clip-path: polygon(1px 0, calc(100% - 1px) 0, calc(100% - 6px) calc(100% - 1px), 6px calc(100% - 1px)); }
.ltab span { position: relative; }
.ltab.cur { width: 34px; color: #fff; font-weight: bold; z-index: 1; }
.ltab.cur::before { background: #151a21; }
.ltab.add { width: 16px; }
.hscroll { width: 299px; display: flex; background: #e4e2dd; border-left: 1px solid #fff; margin-right: 9px; }
.hscroll button, .hscroll .thumb { width: 9px; height: 9px; }

/* command line */
.command { height: 34px; flex: none; display: flex; border-top: 2px solid #333a48; background: #fff; font: 7px/10px "Liberation Mono", "Noto Sans CJK JP", monospace; }
.grip { width: 10px; background: #384d66; display: flex; flex-direction: column; padding-top: 1px; }
.grip button { width: 10px; height: 9px; }
.grip svg { width: 5px; height: 5px; }
.lines { flex: 1; min-width: 0; display: flex; flex-direction: column; }
.log { height: 21px; display: flex; border-bottom: 1px solid #bbb; }
.past { flex: 1; padding-left: 2px; font-size: 6px; font-feature-settings: "palt"; }
.cscroll { display: flex; flex-direction: column; justify-content: space-between; }
.entry { flex: 1; display: flex; align-items: center; padding-left: 2px; }
.entry label { font-size: 6px; font-feature-settings: "palt"; }
.entry input { flex: 1; min-width: 0; height: 9px; outline: 0; }
.hscroll.short { width: 42px; }

/* status bar */
.status { height: 13px; flex: none; display: flex; align-items: stretch; background: #8b9099; }
.coords { width: 138px; padding-left: 2px; line-height: 13px; color: #a9adb4; }
.modes { display: flex; align-items: center; }
.modes button { width: 12px; height: 12px; }
.modes svg { width: 10px; height: 10px; }
.modes .lit { background: #b3b4ba; border: 1px solid #9a9ca3; }
.modes .scale { width: 22px; color: #f0f0f0; font-size: 6px; }
.modes .car { width: 5px; }
.traybar { display: flex; align-items: center; background: #f4f4f6; padding: 0 2px 0 4px; color: #444; }
.traybar button { width: 12px; height: 12px; border-right: 1px solid #ccc; }
.traybar svg { width: 10px; height: 10px; }
.traybar span { padding-left: 1px; font-size: 6px; }

/* context menus over the drawing */
.popup { position: absolute; z-index: 5; display: flex; flex-direction: column; background: #d6d3cc; border: 1px solid; border-color: #f2f1ee #6b6a67 #6b6a67 #f2f1ee; font-feature-settings: "palt"; font-size: 6px; line-height: 8px; }
.mi { flex: 1; min-height: 0; justify-content: flex-start; padding-left: 7px; color: #111; }
.mi span { flex: 1; text-align: left; }
.mi svg { width: 6px; height: 6px; }
.mi.sel { background: #0a246a; color: #fff; }
.mi.chk { padding-left: 2px; }
.mi.chk::before { content: "✓"; width: 6px; font: 5px/8px "DejaVu Sans", sans-serif; }
.mi:disabled { color: #a5a29b; }
.popup hr { border: 0; border-top: 1px solid #8d8b86; border-bottom: 1px solid #f4f4f4; margin: 1px; }
.m1 { left: 6px; top: 298px; width: 61px; height: 34px; }
.m2 { left: 64px; top: 312px; width: 91px; height: 45px; }
.m2 .mi.sel { padding-left: 8px; }
.m3 { left: 151px; top: 346px; width: 57px; height: 20px; }
.m3 .mi { padding-left: 8px; }
.mark { position: absolute; z-index: 6; left: 3px; top: 287px; width: 211px; height: 98px; border: 3px solid #ee3311; pointer-events: none; }
```
